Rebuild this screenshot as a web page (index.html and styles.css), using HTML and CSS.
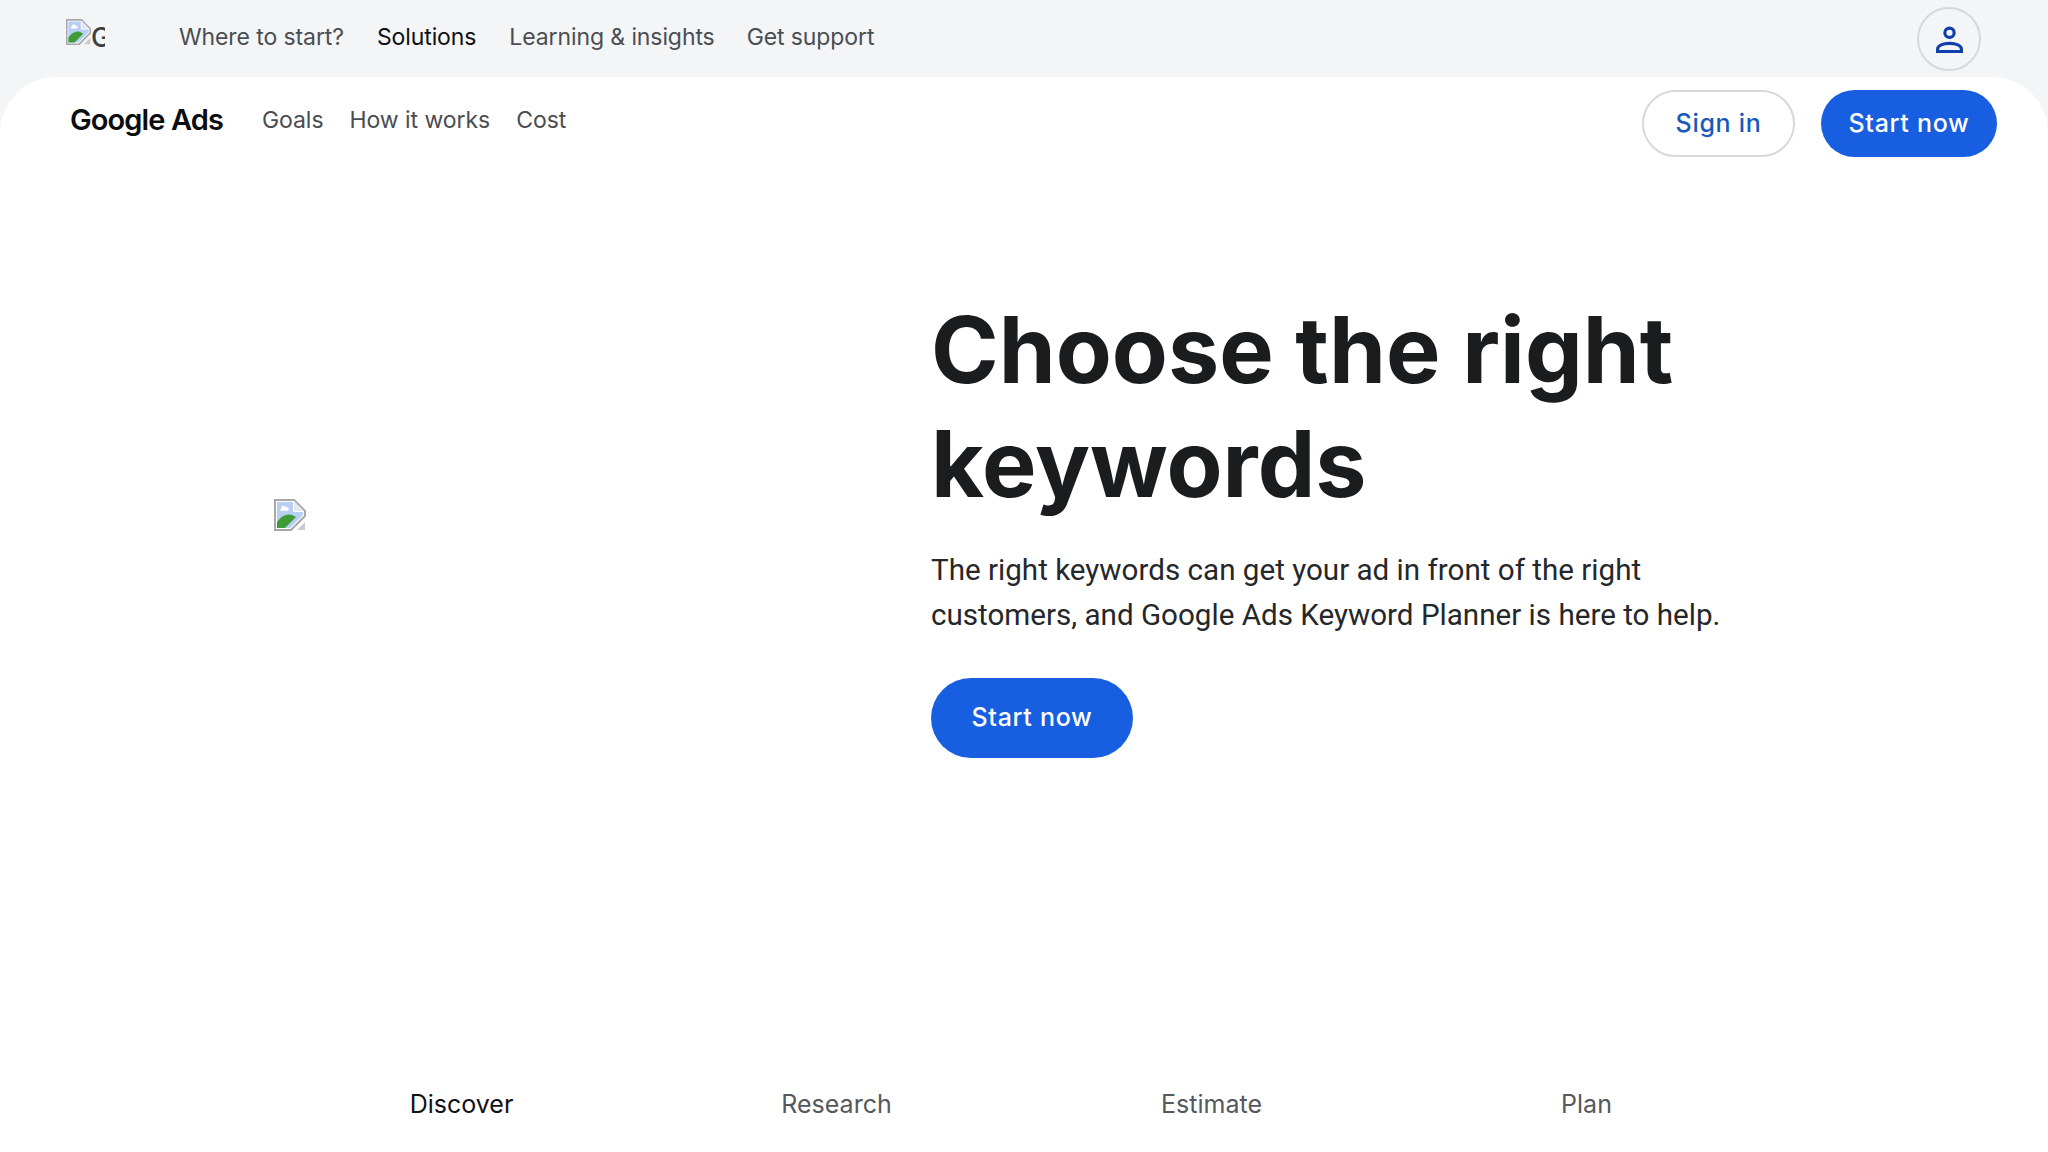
FILE: index.html
```html
<!DOCTYPE html>
<html lang="en">
<head>
<meta charset="utf-8">
<title>Google Ads - Choose the right keywords</title>
<link rel="stylesheet" href="styles.css">
</head>
<body>
<svg width="0" height="0" class="defs" aria-hidden="true">
  <symbol id="broken" viewBox="0 0 16 16" preserveAspectRatio="none">
    <path d="M.5.5h9.500l5.500 5.500v2.500l-7 7H.5z" fill="#fff" stroke="#a5a8ac"/>
    <path d="M1.500 1.500H9.500V6.500H14.500V8L8 14.500H1.500z" fill="#b7cff3"/>
    <path d="M10 1l5 5h-5z" fill="#e6e8eb"/>
    <path d="M3.600 4.800a1.300 1.300 0 0 1 2.500-.6 1 1 0 0 1 1 1.700H3.400a.7.7 0 0 1 .2-1.100z" fill="#fff"/>
    <path d="M1.500 14.500v-3C3.500 8.500 6.500 7 9 8l2 1-5.500 5.500z" fill="#3f9b35"/>
    <path d="M11.500 15.500h4v-4z" fill="#c9cccf"/>
  </symbol>
</svg>
<header class="topbar">
  <div class="logo"><svg class="broken"><use href="#broken"/></svg><span class="alt">Google</span></div>
  <nav class="topnav">
    <a>Where to start?</a>
    <a class="current">Solutions</a>
    <a>Learning &amp; insights</a>
    <a>Get support</a>
  </nav>
  <button class="avatar" aria-label="Account">
    <svg viewBox="0 0 26 26" width="27" height="27"><circle cx="13" cy="6.500" r="4.500" fill="none" stroke="#0f3fa8" stroke-width="3"/><path d="M1.500 24.500v-2.200c0-3.400 5.300-5.600 11.500-5.600s11.500 2.200 11.500 5.600v2.200z" fill="none" stroke="#0f3fa8" stroke-width="3"/></svg>
  </button>
</header>
<main class="sheet">
  <div class="subbar">
    <div class="brand">Google Ads</div>
    <nav class="subnav">
      <a>Goals</a>
      <a>How it works</a>
      <a>Cost</a>
    </nav>
    <div class="actions">
      <a class="btn btn-outline">Sign in</a>
      <a class="btn btn-fill">Start now</a>
    </div>
  </div>
  <section class="hero">
    <div class="hero-art"><svg class="broken"><use href="#broken"/></svg></div>
    <div class="hero-copy">
      <h1>Choose the right keywords</h1>
      <p>The right keywords can get your ad in front of the right customers, and Google Ads Keyword Planner is here to help.</p>
      <a class="btn btn-fill btn-large">Start now</a>
    </div>
  </section>
  <nav class="tabs">
    <a class="current">Discover</a>
    <a>Research</a>
    <a>Estimate</a>
    <a>Plan</a>
  </nav>
</main>
</body>
</html>
```
FILE: styles.css
```css
* { box-sizing: border-box; }
html, body { margin: 0; height: 1152px; overflow: hidden; }
body { background: #f4f5f7; font-family: "Inter", "Noto Sans", sans-serif; color: #3c4043; }
.defs { position: absolute; }
a { color: inherit; text-decoration: none; }
.broken { width: 24px; height: 24px; flex: none; display: block; }

.topbar { height: 77px; display: flex; align-items: flex-start; padding: 0 67px 0 66px; }
.logo { width: 39px; height: 28px; margin-top: 19px; overflow: hidden; display: flex; align-items: flex-start; font-size: 27px; font-weight: 500; color: #3c4043; white-space: nowrap; }
.logo .broken { width: 25px; height: 26px; }
.alt { line-height: 37px; }
.topnav { display: flex; gap: 32px; margin: 21px 0 0 74px; font-size: 23px; line-height: 32px; letter-spacing: -0.1px; color: #4a4d51; }
.topnav .current { color: #101114; margin-left: 1px; margin-right: 1px; }
.avatar { margin: 7px 0 0 auto; width: 64px; height: 64px; border-radius: 50%; border: 2px solid #d6d8db; background: transparent; padding: 0; display: flex; align-items: center; justify-content: center; }

.sheet { background: #fff; border-radius: 56px 56px 0 0; height: 1075px; display: flex; flex-direction: column; }
.subbar { display: flex; align-items: flex-start; padding: 13px 51px 0 70px; }
.brand { font-size: 29px; font-weight: 600; letter-spacing: -0.9px; color: #0c0d0f; line-height: 36px; margin-top: 12px; }
.subnav { display: flex; gap: 26px; margin: 14px 0 0 39px; font-size: 23px; line-height: 32px; letter-spacing: -0.05px; color: #4a4d51; }
.actions { margin-left: auto; display: flex; gap: 26px; }
.btn { display: flex; align-items: center; justify-content: center; height: 67px; padding-bottom: 2px; border-radius: 34px; font-size: 25px; font-weight: 500; letter-spacing: 0.7px; }
.btn-outline { width: 153px; border: 2px solid #d6d8db; color: #185abc; }
.btn-fill { width: 176px; background: #185ee0; color: #fff; }
.btn-large { width: 202px; height: 80px; border-radius: 40px; }

.hero { display: flex; height: 930px; }
.hero-art { width: 931px; padding: 342px 0 0 274px; }
.hero-art .broken { width: 32px; height: 32px; }
.hero-copy { padding-top: 136px; }
h1 { margin: 0; width: 800px; font-size: 91.5px; line-height: 114px; font-weight: 700; color: #1b1c1e; }
p { margin: 27px 0 0; width: 800px; font-family: "Roboto", sans-serif; font-size: 29.6px; line-height: 45px; color: #25272a; }
.hero-copy .btn { margin-top: 40px; }

.tabs { display: grid; grid-template-columns: repeat(4, 375px); justify-content: center; justify-items: center; font-size: 25px; line-height: 34px; color: #55585c; }
.tabs .current { color: #111214; }
```
